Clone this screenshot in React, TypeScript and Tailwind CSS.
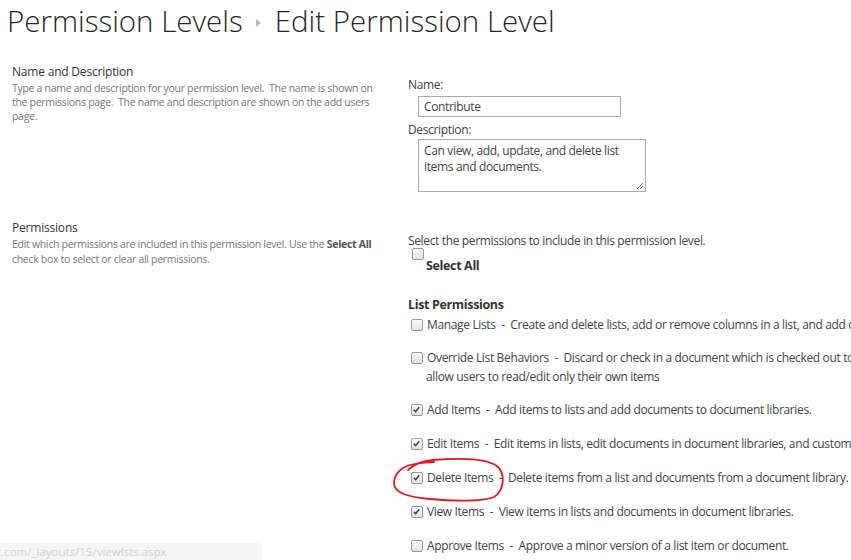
import React from "react";

const F = { fontFamily: '"Open Sans", "Noto Sans", sans-serif' };

function Box({ checked }: { checked?: boolean }) {
  return (
    <span className="relative inline-block w-[12px] h-[12px] rounded-[2px] border border-[#9a9a9a] bg-gradient-to-b from-[#fcfcfc] to-[#e2e2e2] shrink-0">
      {checked && (
        <svg viewBox="0 0 12 12" className="absolute left-[0px] top-[0px] w-[10px] h-[10px]">
          <path d="M2.2 5.6 L4.4 8 L8.6 2.6" fill="none" stroke="#3b3b3b" strokeWidth="1.8" />
        </svg>
      )}
    </span>
  );
}

function Perm({ checked, name, desc, second, tight }: { checked?: boolean; name: string; desc: string; second?: string; tight?: boolean }) {
  return (
    <div className={tight ? "mt-[14px]" : "mt-[15px]"}>
      <div className="flex items-center gap-[4px] whitespace-nowrap h-[19px] pl-[3px]">
        <Box checked={checked} />
        <span>
          {name}&nbsp;&nbsp;-&nbsp;&nbsp;{desc}
        </span>
      </div>
      {second && <div className="pl-[18px] whitespace-nowrap h-[19px] leading-[19px]">{second}</div>}
    </div>
  );
}

export default function App() {
  return (
    <div className="relative w-[851px] h-[560px] overflow-hidden bg-white text-[#444]" style={F}>
      <div className="flex items-center pl-[7px] pt-[0px] h-[42px] text-[29.5px] font-light text-[#262626] whitespace-nowrap">
        <span>Permission Levels</span>
        <span className="ml-[13px] mr-[14px] inline-block w-0 h-0 border-y-[4px] border-y-transparent border-l-[5px] border-l-[#b8b8b8] mt-[4px]" />
        <span>Edit Permission Level</span>
      </div>

      <div className="flex mt-[21px]">
        <div className="w-[408px] pl-[12px] pr-[18px]">
          <div className="text-[12px] leading-[18px] text-[#333] tracking-[-0.2px]">Name and Description</div>
          <div className="text-[10.5px] leading-[14px] text-[#777] tracking-[-0.3px]">
            Type a name and description for your permission level.&nbsp; The name is shown on the permissions page.&nbsp; The name and description are shown on the add users page.
          </div>
        </div>
        <div className="flex-1 text-[12px] tracking-[-0.35px] pt-[13px]">
          <div className="leading-[18px]">Name:</div>
          <div className="ml-[10px] mt-[2px] w-[203px] h-[21px] border border-[#ababab] px-[5px] text-[12px] leading-[19px]">Contribute</div>
          <div className="leading-[18px] mt-[4px]">Description:</div>
          <div className="relative ml-[10px] mt-[0px] w-[228px] h-[53px] border border-[#ababab] px-[5px] pt-[3px] text-[12px] leading-[16px]">
            Can view, add, update, and delete list items and documents.
            <svg viewBox="0 0 8 8" className="absolute right-[1px] bottom-[1px] w-[8px] h-[8px]">
              <path d="M7 1 L1 7 M7 4 L4 7" stroke="#777" strokeWidth="1" />
            </svg>
          </div>
        </div>
      </div>

      <div className="flex mt-[27px]">
        <div className="w-[408px] pl-[12px] pr-[18px]">
          <div className="text-[12px] leading-[18px] text-[#333] tracking-[-0.2px]">Permissions</div>
          <div className="text-[10.5px] leading-[15px] text-[#777] tracking-[-0.3px]">
            Edit which permissions are included in this permission level. Use the <b className="text-[#555]">Select All</b> check box to select or clear all permissions.
          </div>
        </div>
        <div className="flex-1 min-w-0 text-[12px] tracking-[-0.35px] pt-[13px]">
          <div className="leading-[18px]">Select the permissions to include in this permission level.</div>
          <div className="pl-[4px] mt-[-3px] h-[15px]"><Box /></div>
          <div className="pl-[18px] font-bold text-[12.5px] text-[#333] leading-[16px] mt-[-4px]">Select All</div>
          <div className="font-bold text-[12.5px] text-[#333] leading-[18px] mt-[22px]">List Permissions</div>
          <div className="-mt-[13px]">
            <Perm tight name="Manage Lists" desc="Create and delete lists, add or remove columns in a list, and add or remove public views of a list." />
            <Perm tight name="Override List Behaviors" desc="Discard or check in a document which is checked out to another user, and change or override settings which" second="allow users to read/edit only their own items" />
            <Perm tight checked name="Add Items" desc="Add items to lists and add documents to document libraries." />
            <Perm checked name="Edit Items" desc="Edit items in lists, edit documents in document libraries, and customize Web Part Pages in document libraries." />
            <Perm checked name="Delete Items" desc="Delete items from a list and documents from a document library." />
            <Perm checked name="View Items" desc="View items in lists and documents in document libraries." />
            <Perm name="Approve Items" desc="Approve a minor version of a list item or document." />
          </div>
        </div>
      </div>

      <svg className="absolute left-[388px] top-[452px]" width="122" height="54" viewBox="0 0 122 54">
        <path
          d="M20 18 C 26 12, 34 9, 45 8 C 70 6, 100 6, 110 15 C 117 22, 117 38, 106 45 C 94 50, 62 49, 42 47 C 20 45, 6 41, 6 31 C 6 23, 12 16, 22 13 C 30 11, 38 10, 46 10"
          fill="none"
          stroke="#e8141c"
          strokeWidth="1.8"
          strokeLinecap="round"
        />
      </svg>

      <div className="absolute left-0 top-[543px] w-[262px] h-[17px] bg-[#f5f5f5] rounded-tr-[4px] overflow-hidden">
        <div className="ml-[-3px] text-[11.5px] leading-[17px] text-[#d0d0d0] whitespace-nowrap">t.com/_layouts/15/viewlsts.aspx</div>
      </div>
    </div>
  );
}
